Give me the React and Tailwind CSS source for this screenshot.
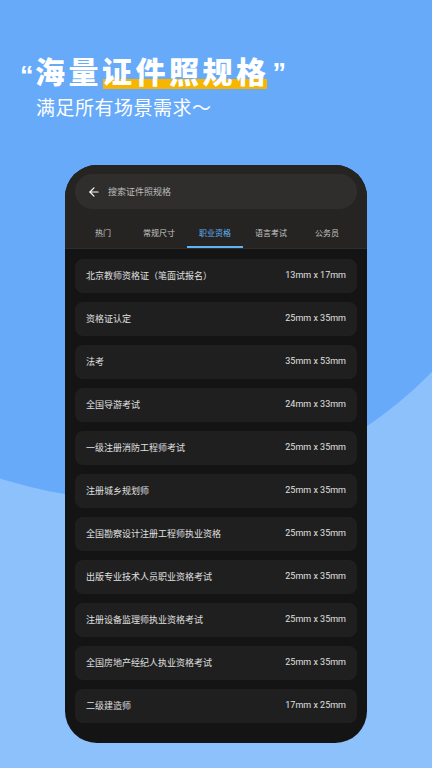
import { ArrowLeft } from "lucide-react";

const tabs = ["热门", "常规尺寸", "职业资格", "语言考试", "公务员"];

const items = [
  { name: "北京教师资格证（笔面试报名）", size: "13mm x 17mm" },
  { name: "资格证认定", size: "25mm x 35mm" },
  { name: "法考", size: "35mm x 53mm" },
  { name: "全国导游考试", size: "24mm x 33mm" },
  { name: "一级注册消防工程师考试", size: "25mm x 35mm" },
  { name: "注册城乡规划师", size: "25mm x 35mm" },
  { name: "全国勘察设计注册工程师执业资格", size: "25mm x 35mm" },
  { name: "出版专业技术人员职业资格考试", size: "25mm x 35mm" },
  { name: "注册设备监理师执业资格考试", size: "25mm x 35mm" },
  { name: "全国房地产经纪人执业资格考试", size: "25mm x 35mm" },
  { name: "二级建造师", size: "17mm x 25mm" },
];

export default function App() {
  return (
    <div className="relative w-[432px] h-[768px] overflow-hidden bg-[#8dc1fc] font-['Noto_Sans_CJK_SC',sans-serif]">
      {/* background blob */}
      <div className="absolute left-[-292px] top-[-345px] w-[844px] h-[844px] rounded-full bg-[#66aaf9]" />

      <div className="relative flex flex-col">
        {/* headline */}
        <div className="flex items-start pt-[52px] pl-[20px] h-[92px]">
          <span className="w-[15px] mt-[6px] text-[27px] leading-[36px] font-bold text-white font-['Liberation_Sans',sans-serif]">“</span>
          <span className="text-[30px] leading-[36px] font-black text-white tracking-[3.5px]">海量</span>
          <span className="relative">
            <span className="absolute left-[1px] right-[3px] top-[27px] h-[10px] bg-[#f7b500]" />
            <span className="relative text-[30px] leading-[36px] font-black text-white tracking-[3.5px]">证件照规格</span>
          </span>
          <span className="ml-[3px] mt-[3px] text-[27px] leading-[36px] font-bold text-white font-['Liberation_Sans',sans-serif]">”</span>
        </div>
        <div className="pl-[36px] pt-[3px] text-[19px] leading-[24px] text-white tracking-[0.5px]">满足所有场景需求～</div>

        {/* phone */}
        <div className="ml-[65px] mt-[46px] w-[302px] h-[578px] rounded-[32px] overflow-hidden bg-[#141414] flex flex-col">
          <div className="bg-[#262422] pt-[9px] px-[10px] border-b border-[#2e2d2c]">
            <div className="h-[35px] rounded-full bg-[#302e2c] flex items-center pl-[12px]">
              <ArrowLeft className="w-[14px] h-[14px] text-white" strokeWidth={2} />
              <span className="ml-[7px] text-[9px] text-[#bdbdbd]">搜索证件照规格</span>
            </div>
            <div className="flex mt-[15px]">
              {tabs.map((t) => (
                <div key={t} className="w-[56px] flex flex-col items-center">
                  <span className={`text-[8px] leading-[18px] ${t === "职业资格" ? "text-[#5fb3f2]" : "text-[#c8c8c8]"}`}>{t}</span>
                  <div className={`w-full h-[2px] mt-[4px] ${t === "职业资格" ? "bg-[#5fb3f2]" : "bg-transparent"}`} />
                </div>
              ))}
            </div>
          </div>

          <div className="flex flex-col gap-[9px] px-[10px] pt-[10px]">
            {items.map((it) => (
              <div key={it.name} className="h-[34px] rounded-[8px] bg-[#1f1f1f] flex items-center justify-between px-[11px]">
                <span className="text-[9px] text-[#e0e0e0]">{it.name}</span>
                <span className="text-[9px] text-[#e0e0e0] font-['Roboto',sans-serif]">{it.size}</span>
              </div>
            ))}
          </div>
        </div>
      </div>
    </div>
  );
}
